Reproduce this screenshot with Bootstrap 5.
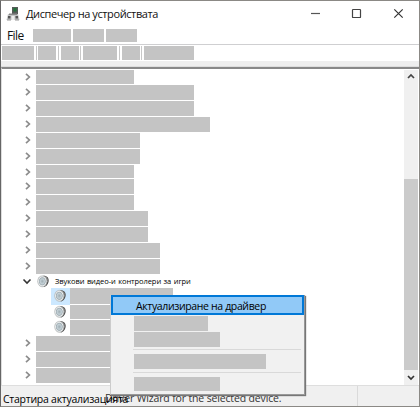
<!DOCTYPE html>
<html lang="bg">
<head>
<meta charset="utf-8">
<meta name="viewport" content="width=device-width, initial-scale=1">
<title>Диспечер на устройствата</title>
<link href="https://cdn.jsdelivr.net/npm/bootstrap@5.3.0/dist/css/bootstrap.min.css" rel="stylesheet">
<style>
body{font-family:"Open Sans","Noto Sans",sans-serif;font-size:11px;line-height:1;color:#111;width:420px;height:407px}
.window{width:420px;height:407px;border:1px solid #8b8985;border-left-color:#666}
.titlebar{height:25px;padding-left:5px}
.title-text{font-size:11px;letter-spacing:-.4px;margin-left:6px}
.controls{gap:28.5px;margin-right:15px}
.menus{height:18px;padding-left:6px}
.file-label{font-size:12px;letter-spacing:-.6px;width:26px;line-height:17px}
.mask{background:#c4c4c4;flex:none}
.tools{height:17px;border-top:1px solid #cfcfd1;padding:1px 0 0 1px}
.divider{width:1px;height:14px;background:#c8c8c8}
.band{height:6px;background:#eee;border-bottom:1px solid #ddd}
.tree-pane{height:318px;border-top:2px solid #888;border-left:1px solid #ddd}
.tree{padding-top:1px}
.tree-row{height:16px;padding-left:23px}
.tree-row .mask{height:calc(100% - 1px)}
.chev{width:6px;height:8px;margin:3px 5px 0 0;flex:none}
.h15{height:15px}.h14{height:14px}.h17{height:17px}
.opened{height:13px;padding-left:20px}
.group-text{font-size:7.5px;color:#000;white-space:nowrap;line-height:10px;letter-spacing:-.07px;word-spacing:.6px;margin-top:-2px}
.child{padding-left:49px}
.spk{width:19px;height:100%;flex:none;padding:1px 0 0 3px}
.chosen{background:#cce8ff}
.scroll{width:14px;background:#f0f0f0;margin:1px 1px 0 0}
.thumb{height:191px;background:#cbcbcb}
.status{height:20px;background:#f0f0f0;border-top:1px solid #dedede;white-space:nowrap}
.status-left{width:357px;border-right:1px solid #dadada;padding-left:2px}
.status-bg{width:102px;font-size:10.5px;letter-spacing:-.26px;color:#000;line-height:27px;z-index:1}
.status-en{font-size:10.5px;letter-spacing:-.15px;color:#333;line-height:24px}
.popup{left:110px;top:295px;width:195px;height:100px;background:#f1f1f1;border:1px solid #ccc;border-top:0;border-right-color:#999;border-bottom-color:#999;box-shadow:1px 1px 1px #777;z-index:3}
.picked{height:20px;background:#91c9f7;border:2px solid #0078d7;font-size:10.5px;letter-spacing:-.36px;line-height:19px;padding-left:23px;color:#000;white-space:nowrap}
.popup .mask{margin-left:23px}
.rule{height:1px;background:#d9d9d9;margin:0 3px 0 22px}
</style>
<script src="https://cdn.jsdelivr.net/npm/bootstrap@5.3.0/dist/js/bootstrap.bundle.min.js"></script>
</head>
<body class="m-0 overflow-hidden">
<svg width="0" height="0" class="position-absolute">
<defs>
<radialGradient id="cone"><stop offset="0" stop-color="#9fadb3"/><stop offset=".45" stop-color="#c3d0d6"/><stop offset=".65" stop-color="#a3b0b6"/><stop offset=".8" stop-color="#eceeef"/><stop offset="1" stop-color="#b4b8b9"/></radialGradient>
<symbol id="right" viewBox="0 0 6 8"><path d="M1 .8 4.400 4 1 7.200" fill="none" stroke="#8c8c8c" stroke-width="1.700"/></symbol>
<symbol id="speaker" viewBox="0 0 13 13"><path d="M6 .8C10 .5 12.200 3 11.600 6.500c-.5 3-2.800 5.500-5 5.500z" fill="#484848"/><path d="M8 1.500c2.500 1 3 3 2.500 5.500" fill="none" stroke="#888" stroke-width=".8"/><ellipse cx="5.300" cy="6.300" rx="4.700" ry="5.600" fill="url(#cone)" stroke="#b9bcbd" stroke-width=".5"/></symbol>
</defs>
</svg>
<div class="window position-relative bg-white d-flex flex-column">
  <header class="titlebar d-flex align-items-center">
    <svg width="14" height="15" viewBox="0 0 14 15"><path d="M6 1h6v7H6z" fill="#555b58"/><path d="M7.500 2h3v3.500h-3z" fill="#24713b"/><path d="M2 8h10l1.500 6H.5z" fill="#c3c5c6"/><path d="M3 7.500h8v1.500H3z" fill="#888"/><path d="M2 10h2.500v2.500H2zm7.500 0H12v2.500H9.500z" fill="#555"/><path d="M5.500 10h3v4h-3z" fill="#eee"/><path d="M1 14h4m4 0h4" stroke="#999"/></svg>
    <span class="title-text">Диспечер на устройствата</span>
    <div class="controls d-flex align-items-center ms-auto">
      <svg width="11" height="11" viewBox="0 0 11 11"><path d="M1 5.500h9" stroke="#555" stroke-width="1.200"/></svg>
      <svg width="15" height="11" viewBox="0 0 15 11"><rect x="2.500" y="1.500" width="8" height="8" rx=".6" fill="none" stroke="#444" stroke-width="1.200"/></svg>
      <svg width="11" height="11" viewBox="0 0 11 11"><path d="m1.300 1.300 8.400 8.400m0-8.400-8.400 8.400" stroke="#333" stroke-width="1.200"/></svg>
    </div>
  </header>
  <nav class="menus d-flex align-items-center">
    <span class="file-label">File</span>
    <div class="d-flex" style="gap:2px"><i class="mask" style="width:38px;height:13px"></i><i class="mask" style="width:31px;height:13px"></i><i class="mask" style="width:31px;height:13px"></i></div>
  </nav>
  <div class="tools d-flex align-items-start">
    <i class="mask" style="width:32px;height:14px"></i><i class="divider mx-auto"></i><i class="mask" style="width:18px;height:14px"></i><i class="divider mx-auto"></i><i class="mask" style="width:18px;height:14px"></i><i class="divider mx-auto"></i><i class="mask" style="width:34px;height:14px"></i><i class="divider mx-auto"></i><i class="mask" style="width:18px;height:14px"></i><i class="divider mx-auto"></i><i class="mask" style="width:50px;height:14px;margin-right:225px"></i>
  </div>
  <div class="band"></div>
  <main class="tree-pane d-flex">
    <div class="tree flex-grow-1">
      <div class="tree-row h15 d-flex"><svg class="chev"><use href="#right"/></svg><i class="mask" style="width:98px"></i></div>
      <div class="tree-row d-flex"><svg class="chev"><use href="#right"/></svg><i class="mask" style="width:158px"></i></div>
      <div class="tree-row d-flex"><svg class="chev"><use href="#right"/></svg><i class="mask" style="width:158px"></i></div>
      <div class="tree-row d-flex"><svg class="chev"><use href="#right"/></svg><i class="mask" style="width:174px"></i></div>
      <div class="tree-row d-flex"><svg class="chev"><use href="#right"/></svg><i class="mask" style="width:104px"></i></div>
      <div class="tree-row d-flex"><svg class="chev"><use href="#right"/></svg><i class="mask" style="width:104px"></i></div>
      <div class="tree-row h14 d-flex"><svg class="chev"><use href="#right"/></svg><i class="mask" style="width:98px"></i></div>
      <div class="tree-row d-flex"><svg class="chev"><use href="#right"/></svg><i class="mask" style="width:98px"></i></div>
      <div class="tree-row d-flex"><svg class="chev"><use href="#right"/></svg><i class="mask" style="width:98px"></i></div>
      <div class="tree-row d-flex"><svg class="chev"><use href="#right"/></svg><i class="mask" style="width:112px"></i></div>
      <div class="tree-row d-flex"><svg class="chev"><use href="#right"/></svg><i class="mask" style="width:112px"></i></div>
      <div class="tree-row d-flex"><svg class="chev"><use href="#right"/></svg><i class="mask" style="width:124px"></i></div>
      <div class="tree-row d-flex"><svg class="chev"><use href="#right"/></svg><i class="mask" style="width:124px"></i></div>
      <div class="opened d-flex align-items-center"><svg width="10" height="7" viewBox="0 0 10 7"><path d="m1.500 1.500 3.500 3.500 3.500-3.500" fill="none" stroke="#333" stroke-width="1.600"/></svg><svg width="13" height="13" style="margin:0 5px"><use href="#speaker"/></svg><span class="group-text">Звукови видео-и контролери за игри</span></div>
      <div class="tree-row child h17 d-flex"><span class="spk chosen"><svg width="13" height="14"><use href="#speaker"/></svg></span><i class="mask" style="width:103px"></i></div>
      <div class="tree-row child h15 d-flex"><span class="spk pt-0"><svg width="13" height="14"><use href="#speaker"/></svg></span><i class="mask" style="width:60px"></i></div>
      <div class="tree-row child d-flex"><span class="spk pt-0"><svg width="13" height="14"><use href="#speaker"/></svg></span><i class="mask" style="width:60px"></i></div>
      <div class="tree-row d-flex"><svg class="chev"><use href="#right"/></svg><i class="mask" style="width:90px"></i></div>
      <div class="tree-row d-flex"><svg class="chev"><use href="#right"/></svg><i class="mask" style="width:90px"></i></div>
      <div class="tree-row d-flex"><svg class="chev"><use href="#right"/></svg><i class="mask" style="width:90px"></i></div>
    </div>
    <div class="scroll d-flex flex-column justify-content-between">
      <svg width="14" height="13" viewBox="0 0 14 13"><path d="m4 8 3-3 3 3" fill="none" stroke="#444" stroke-width="1.700"/></svg>
      <div class="thumb mt-auto"></div>
      <svg width="14" height="15" viewBox="0 0 14 15"><path d="m4 6 3 3 3-3" fill="none" stroke="#333" stroke-width="1.700"/></svg>
    </div>
  </main>
  <footer class="status d-flex flex-grow-1">
    <div class="status-left d-flex"><span class="status-bg">Стартира актуализацията</span><span class="status-en">Driver Wizard for the selected device.</span></div>
  </footer>
</div>
<div class="popup position-absolute">
  <div class="picked">Актуализиране на драйвер</div>
  <div class="mask" style="width:74px;height:15px;margin-top:1px"></div>
  <div class="mask" style="width:86px;height:15px;margin-top:1px"></div>
  <div class="rule" style="margin-top:2px"></div>
  <div class="mask" style="width:132px;height:15px;margin-top:4px"></div>
  <div class="rule" style="margin-top:3px"></div>
  <div class="mask" style="width:86px;height:14px;margin-top:4px"></div>
</div>
</body>
</html>
